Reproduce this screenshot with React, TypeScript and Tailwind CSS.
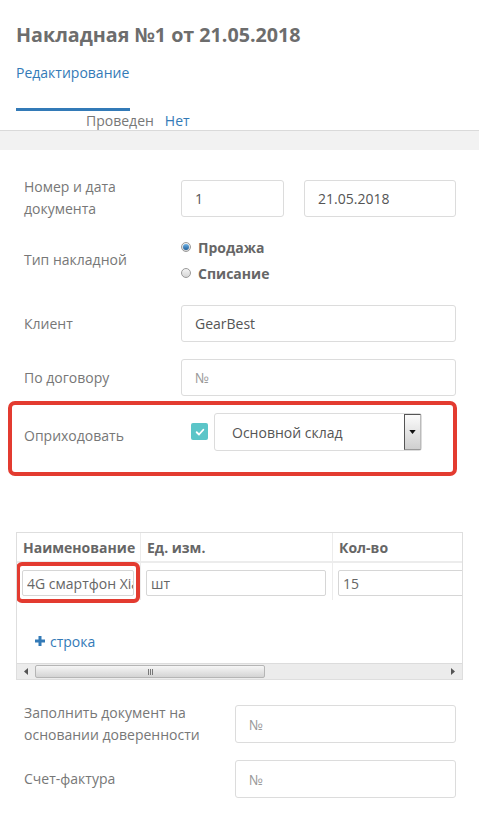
import { ReactNode } from "react";

function Field({ value, placeholder, className = "" }: { value?: string; placeholder?: string; className?: string }) {
  return (
    <div
      className={`flex h-[37px] items-center rounded-[3px] border border-[#dcdcdc] bg-white px-[13px] text-[14px] ${
        value ? "text-[#555]" : "text-[#9a9a9a]"
      } ${className}`}
    >
      {value ?? placeholder}
    </div>
  );
}

function Row({ label, labelWidth, children, className = "" }: { label: ReactNode; labelWidth: string; children: ReactNode; className?: string }) {
  return (
    <div className={`flex items-center ${className}`}>
      <div className={`${labelWidth} shrink-0 text-[14px] leading-[22px] text-[#777]`}>{label}</div>
      <div className="flex flex-1 gap-5">{children}</div>
    </div>
  );
}

function Radio({ checked, label }: { checked?: boolean; label: string }) {
  return (
    <div className="flex h-[26px] items-center gap-[7px]">
      <span className="flex h-[10px] w-[10px] items-center justify-center rounded-full border border-[#9a9a9a] bg-gradient-to-b from-[#f4f4f4] to-[#d6d6d6]">
        {checked && <span className="h-[6px] w-[6px] rounded-full bg-gradient-to-b from-[#6fb3e6] to-[#1d5f9a]" />}
      </span>
      <span className="text-[14px] font-bold text-[#666]">{label}</span>
    </div>
  );
}

function CellInput({ value, className = "" }: { value: string; className?: string }) {
  return (
    <div className={`flex h-[26px] items-center overflow-hidden rounded-[2px] border border-[#d6d6d6] bg-white pl-[4px] text-[14px] text-[#666] ${className}`}>
      <span className="block w-full overflow-hidden whitespace-nowrap">{value}</span>
    </div>
  );
}

export default function App() {
  return (
    <div className="min-h-[818px] w-full bg-white font-['Open_Sans',sans-serif]">
      {/* header */}
      <div className="px-4 pt-[21px]">
        <h1 className="text-[19.7px] font-bold leading-[28px] text-[#6d6d6d]">Накладная №1 от 21.05.2018</h1>
        <div className="mt-[14px] w-[114px] border-b-[3px] border-[#337ab7] pb-[25px] text-[14px] leading-[20px] text-[#337ab7]">
          Редактирование
        </div>
        <div className="flex h-[19px] items-center gap-[11px] pl-[70px] text-[14px] leading-[19px]">
          <span className="text-[#777]">Проведен</span>
          <span className="text-[#337ab7]">Нет</span>
        </div>
      </div>
      <div className="h-[20px] border-t border-[#dadada] bg-[#f2f2f2]" />

      {/* main form */}
      <div className="pl-6 pr-[23px]">
        <Row label={<>Номер и дата<br />документа</>} labelWidth="w-[157px]" className="mt-[26px]">
          <Field value="1" className="w-[103px]" />
          <Field value="21.05.2018" className="w-[152px] px-[9px]" />
        </Row>

        <Row label="Тип накладной" labelWidth="w-[157px]" className="mt-[14px]">
          <div className="flex flex-col">
            <Radio checked label="Продажа" />
            <Radio label="Списание" />
          </div>
        </Row>

        <Row label="Клиент" labelWidth="w-[157px]" className="mt-[19px]">
          <Field value="GearBest" className="flex-1" />
        </Row>

        <Row label="По договору" labelWidth="w-[157px]" className="mt-[17px]">
          <Field placeholder="№" className="flex-1" />
        </Row>

        <div className="-ml-4 mt-[5px] mr-[-1px] flex rounded-[7px] border-4 border-[#e33b30] pb-[21px] pl-3 pt-2">
          <div className="mt-[13px] w-[167px] shrink-0 text-[14px] leading-[20px] text-[#777]">Оприходовать</div>
          <div className="mt-[10px] flex h-[17px] w-[17px] items-center justify-center rounded-[2px] bg-[#5bc5c8]">
            <svg viewBox="0 0 12 12" className="h-[10px] w-[10px]">
              <path d="M2 6.3 L4.8 9 L10 3.3" fill="none" stroke="white" strokeWidth="2.2" strokeLinecap="round" strokeLinejoin="round" />
            </svg>
          </div>
          <div className="ml-[6px] flex h-[38px] w-[208px] items-center rounded-[3px] border border-[#dcdcdc] bg-white pl-[17px]">
            <span className="flex-1 text-[14px] text-[#555]">Основной склад</span>
            <div className="flex h-[36px] w-[17px] items-center justify-center border border-[#555] border-r-[#bbb] border-b-[#999] bg-gradient-to-b from-[#fbfbfb] to-[#cfcfcf]">
              <svg viewBox="0 0 8 5" className="h-[4px] w-[7px]">
                <path d="M0 0 H8 L4 5 Z" fill="#111" />
              </svg>
            </div>
          </div>
        </div>
      </div>

      {/* table */}
      <div className="ml-4 mt-[56px] w-[447px] overflow-hidden border border-[#dedede]">
        <div className="w-[700px]">
          <div className="flex h-[30px] border-b-2 border-[#ececec] text-[14px] font-bold text-[#666]">
            <div className="flex w-[124px] items-center border-r border-[#ececec] pl-[6px]">Наименование</div>
            <div className="flex w-[192px] items-center border-r border-[#ececec] pl-[6px]">Ед. изм.</div>
            <div className="flex w-[200px] items-center border-r border-[#ececec] pl-[6px]">Кол-во</div>
          </div>
          <div className="flex">
            <div className="relative w-[124px] border-r border-[#ececec] pb-[4px] pl-[5px] pr-[6px] pt-[7px]">
              <CellInput value="4G смартфон Xiaomi" className="w-[112px]" />
              <div className="absolute left-[-1px] top-[-1px] h-[41px] w-[124px] rounded-[6px] border-4 border-[#e33b30]" />
            </div>
            <div className="w-[192px] border-r border-[#ececec] pb-[4px] pl-[5px] pr-[6px] pt-[7px]">
              <CellInput value="шт" className="w-[180px]" />
            </div>
            <div className="w-[200px] border-r border-[#ececec] pb-[4px] pl-[5px] pr-[6px] pt-[7px]">
              <CellInput value="15" className="w-[189px]" />
            </div>
          </div>
        </div>
        <div className="mt-[31px] flex h-[20px] items-center gap-[5px] pl-[18px] text-[14px] text-[#337ab7]">
          <svg viewBox="0 0 10 10" className="h-[10px] w-[10px]">
            <path d="M5 0 V10 M0 5 H10" stroke="#337ab7" strokeWidth="3" />
          </svg>
          <span>строка</span>
        </div>
        <div className="mt-[12px] flex h-[16px] items-center border-t border-[#dcdcdc] bg-[#ececec]">
          <div className="flex w-[18px] items-center justify-center">
            <svg viewBox="0 0 4 7" className="h-[7px] w-[4px]">
              <path d="M4 0 V7 L0 3.5 Z" fill="#555" />
            </svg>
          </div>
          <div className="flex h-[13px] w-[230px] items-center justify-center gap-[1px] rounded-[2px] border border-[#b5b5b5] bg-gradient-to-b from-[#f6f6f6] to-[#d4d4d4]">
            <span className="h-[6px] w-[1px] bg-[#777]" />
            <span className="h-[6px] w-[1px] bg-[#777]" />
            <span className="h-[6px] w-[1px] bg-[#777]" />
          </div>
          <div className="flex-1" />
          <div className="flex w-[18px] items-center justify-center">
            <svg viewBox="0 0 4 7" className="h-[7px] w-[4px]">
              <path d="M0 0 V7 L4 3.5 Z" fill="#555" />
            </svg>
          </div>
        </div>
      </div>

      {/* bottom form */}
      <div className="pb-6 pl-6 pr-[23px]">
        <Row label={<>Заполнить документ на<br />основании доверенности</>} labelWidth="w-[211px]" className="mt-[22px]">
          <Field placeholder="№" className="h-[38px] flex-1" />
        </Row>
        <Row label="Счет-фактура" labelWidth="w-[211px]" className="mt-[14px]">
          <Field placeholder="№" className="h-[38px] flex-1" />
        </Row>
      </div>
    </div>
  );
}
